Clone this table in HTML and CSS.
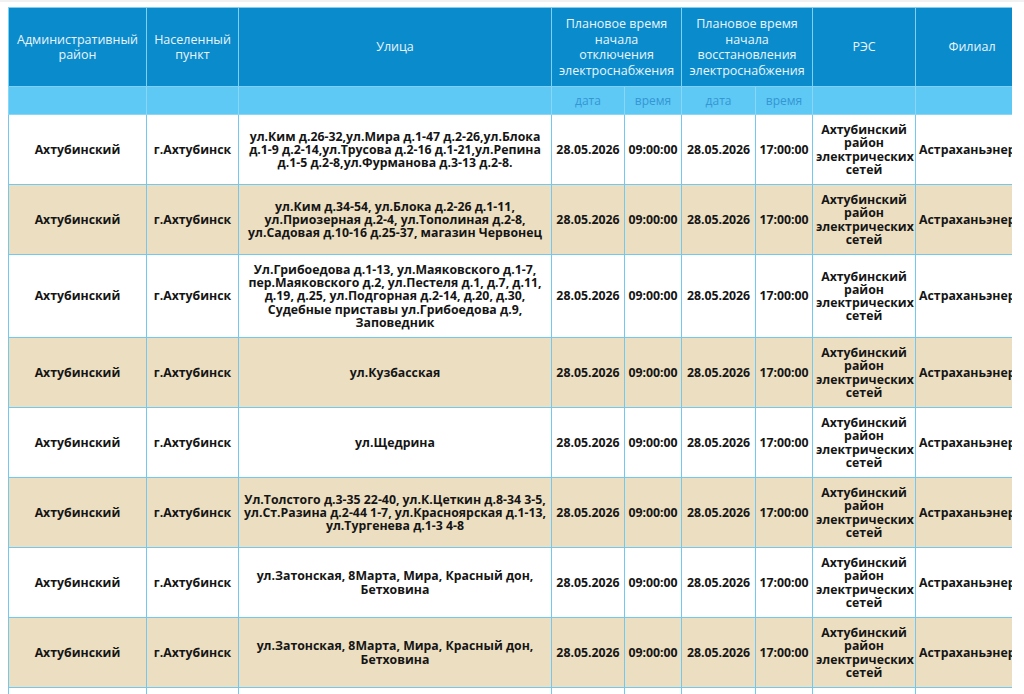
FILE: index.html
```html
<!DOCTYPE html>
<html lang="ru">
<head>
<meta charset="utf-8">
<title>График отключений</title>
<link rel="stylesheet" href="styles.css">
</head>
<body>
<div class="topstrip"></div>
<div class="wrap">
<table class="grid">
<colgroup>
<col class="c1"><col class="c2"><col class="c3"><col class="c4"><col class="c5"><col class="c6"><col class="c7"><col class="c8"><col class="c9">
</colgroup>
<thead>
<tr class="head">
<th>Административный район</th>
<th>Населенный пункт</th>
<th>Улица</th>
<th colspan="2">Плановое время начала отключения электроснабжения</th>
<th colspan="2">Плановое время начала восстановления электроснабжения</th>
<th>РЭС</th>
<th>Филиал</th>
</tr>
<tr class="sub">
<th></th><th></th><th></th>
<th>дата</th><th>время</th><th>дата</th><th>время</th>
<th></th><th></th>
</tr>
</thead>
<tbody>
<tr>
<td>Ахтубинский</td><td>г.Ахтубинск</td>
<td>ул.Ким д.26-32,ул.Мира д.1-47 д.2-26,ул.Блока д.1-9 д.2-14,ул.Трусова д.2-16 д.1-21,ул.Репина д.1-5 д.2-8,ул.Фурманова д.3-13 д.2-8.</td>
<td>28.05.2026</td><td>09:00:00</td><td>28.05.2026</td><td>17:00:00</td>
<td>Ахтубинский район электрических сетей</td><td>Астраханьэнерго</td>
</tr>
<tr class="alt">
<td>Ахтубинский</td><td>г.Ахтубинск</td>
<td>ул.Ким д.34-54, ул.Блока д.2-26 д.1-11, ул.Приозерная д.2-4, ул.Тополиная д.2-8, ул.Садовая д.10-16 д.25-37, магазин Червонец</td>
<td>28.05.2026</td><td>09:00:00</td><td>28.05.2026</td><td>17:00:00</td>
<td>Ахтубинский район электрических сетей</td><td>Астраханьэнерго</td>
</tr>
<tr>
<td>Ахтубинский</td><td>г.Ахтубинск</td>
<td>Ул.Грибоедова д.1-13, ул.Маяковского д.1-7, пер.Маяковского д.2, ул.Пестеля д.1, д.7, д.11, д.19, д.25, ул.Подгорная д.2-14, д.20, д.30, Судебные приставы ул.Грибоедова д.9, Заповедник</td>
<td>28.05.2026</td><td>09:00:00</td><td>28.05.2026</td><td>17:00:00</td>
<td>Ахтубинский район электрических сетей</td><td>Астраханьэнерго</td>
</tr>
<tr class="alt">
<td>Ахтубинский</td><td>г.Ахтубинск</td>
<td>ул.Кузбасская</td>
<td>28.05.2026</td><td>09:00:00</td><td>28.05.2026</td><td>17:00:00</td>
<td>Ахтубинский район электрических сетей</td><td>Астраханьэнерго</td>
</tr>
<tr>
<td>Ахтубинский</td><td>г.Ахтубинск</td>
<td>ул.Щедрина</td>
<td>28.05.2026</td><td>09:00:00</td><td>28.05.2026</td><td>17:00:00</td>
<td>Ахтубинский район электрических сетей</td><td>Астраханьэнерго</td>
</tr>
<tr class="alt">
<td>Ахтубинский</td><td>г.Ахтубинск</td>
<td>Ул.Толстого д.3-35 22-40, ул.К.Цеткин д.8-34 3-5, ул.Ст.Разина д.2-44 1-7, ул.Красноярская д.1-13, ул.Тургенева д.1-3 4-8</td>
<td>28.05.2026</td><td>09:00:00</td><td>28.05.2026</td><td>17:00:00</td>
<td>Ахтубинский район электрических сетей</td><td>Астраханьэнерго</td>
</tr>
<tr>
<td>Ахтубинский</td><td>г.Ахтубинск</td>
<td>ул.Затонская, 8Марта, Мира, Красный дон, Бетховина</td>
<td>28.05.2026</td><td>09:00:00</td><td>28.05.2026</td><td>17:00:00</td>
<td>Ахтубинский район электрических сетей</td><td>Астраханьэнерго</td>
</tr>
<tr class="alt">
<td>Ахтубинский</td><td>г.Ахтубинск</td>
<td>ул.Затонская, 8Марта, Мира, Красный дон, Бетховина</td>
<td>28.05.2026</td><td>09:00:00</td><td>28.05.2026</td><td>17:00:00</td>
<td>Ахтубинский район электрических сетей</td><td>Астраханьэнерго</td>
</tr>
<tr>
<td>Ахтубинский</td><td>г.Ахтубинск</td>
<td>ул.Затонская, 8Марта, Мира, Красный дон, Бетховина</td>
<td>28.05.2026</td><td>09:00:00</td><td>28.05.2026</td><td>17:00:00</td>
<td>Ахтубинский район электрических сетей</td><td>Астраханьэнерго</td>
</tr>
</tbody>
</table>
</div>
</body>
</html>
```

FILE: styles.css
```css
html, body {
  margin: 0;
  padding: 0;
  background: #ffffff;
  font-family: "Open Sans", "Noto Sans", "DejaVu Sans", sans-serif;
}

.topstrip {
  height: 2px;
  background: #f1f1f1;
}

.wrap {
  margin: 5px 0 0 8px;
  width: 1004px;
  overflow: hidden;
}

.grid {
  border-collapse: collapse;
  table-layout: fixed;
  width: 1020px;
}

.c1 { width: 138px; }
.c2 { width: 92px; }
.c3 { width: 313px; }
.c4 { width: 73px; }
.c5 { width: 57px; }
.c6 { width: 74px; }
.c7 { width: 57px; }
.c8 { width: 103px; }
.c9 { width: 113px; }

.grid th,
.grid td {
  border: 1px solid #72c8ef;
  text-align: center;
  vertical-align: middle;
}

.head th {
  background: #0a8bcb;
  color: #e9f5fb;
  font-weight: 400;
  font-size: 12.5px;
  line-height: 15.5px;
  padding: 8px 4px;
  height: 62px;
  border-color: #7fd0f2;
}

.sub th {
  background: #5ec9f5;
  color: #3596d3;
  font-weight: 400;
  font-size: 12px;
  line-height: 16px;
  height: 27px;
  padding: 0 4px;
  border-color: #8ad6f5;
}

.grid td {
  font-size: 12.3px;
  font-weight: 700;
  line-height: 13.2px;
  color: #151515;
  padding: 8px 3px;
  height: 53px;
  background: #ffffff;
}

.grid td:nth-child(3) {
  padding: 8px 3px;
}

.grid tr.alt td {
  background: #ecdec1;
}
```
